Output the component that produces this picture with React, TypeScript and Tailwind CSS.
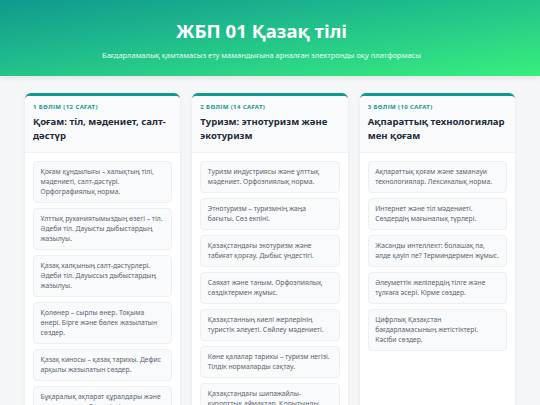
import React from "react";

const modules = [
  {
    label: "1 бөлім (12 сағат)",
    title: "Қоғам: тіл, мәдениет, салт-дәстүр",
    items: [
      "Қоғам құндылығы – халықтың тілі, мәдениеті, салт-дәстүрі. Орфографиялық норма.",
      "Ұлттық руханиятымыздың өзегі – тіл. Әдеби тіл. Дауысты дыбыстардың жазылуы.",
      "Қазақ халқының салт-дәстүрлері. Әдеби тіл. Дауыссыз дыбыстардың жазылуы.",
      "Қолөнер – сырлы өнер. Тоқыма өнері. Бірге және бөлек жазылатын сөздер.",
      "Қазақ киносы – қазақ тарихы. Дефис арқылы жазылатын сөздер.",
      "Бұқаралық ақпарат құралдары және ұлттық мүдде. Бас әріптің жазылуы.",
    ],
  },
  {
    label: "2 бөлім (14 сағат)",
    title: "Туризм: этнотуризм және экотуризм",
    items: [
      "Туризм индустриясы және ұлттық мәдениет. Орфоэпиялық норма.",
      "Этнотуризм – туризмнің жаңа бағыты. Сөз екпіні.",
      "Қазақстандағы экотуризм және табиғат қорғау. Дыбыс үндестігі.",
      "Саяхат және таным. Орфоэпиялық сөздіктермен жұмыс.",
      "Қазақстанның киелі жерлерінің туристік әлеуеті. Сөйлеу мәдениеті.",
      "Көне қалалар тарихы – туризм негізі. Тілдік нормаларды сақтау.",
      "Қазақстандағы шипажайлы-курорттық аймақтар. Қорытынды сабақ.",
    ],
  },
  {
    label: "3 бөлім (10 сағат)",
    title: "Ақпараттық технологиялар мен қоғам",
    items: [
      "Ақпараттық қоғам және заманауи технологиялар. Лексикалық норма.",
      "Интернет және тіл мәдениеті. Сөздердің мағыналық түрлері.",
      "Жасанды интеллект: болашақ па, әлде қауіп пе? Терминдермен жұмыс.",
      "Әлеуметтік желілердің тілге және тұлғаға әсері. Кірме сөздер.",
      "Цифрлық Қазақстан бағдарламасының жетістіктері. Кәсіби сөздер.",
    ],
  },
];

export default function App() {
  return (
    <div className="w-[540px] h-[405px] overflow-hidden bg-[#f4f6f7] font-['Noto_Sans',sans-serif]">
      <header className="h-[76px] pr-[17px] bg-gradient-to-br from-[#11998e] to-[#38ef7d] flex flex-col items-center text-white shadow-[0_2px_6px_rgba(0,0,0,0.08)]">
        <h1 className="mt-[18px] text-[18.6px] leading-[26px] font-bold">ЖБП 01 Қазақ тілі</h1>
        <p className="mt-[6px] text-[7.47px] leading-[10px] text-white/90">
          Бағдарламалық қамтамасыз ету мамандығына арналған электронды оқу платформасы
        </p>
      </header>
      <main className="grid grid-cols-3 gap-[12px] px-[25px] pt-[17px]">
        {modules.map((m) => (
          <section
            key={m.label}
            className="bg-white rounded-[6px] border-t-[3px] border-[#11998e] shadow-[0_1px_4px_rgba(0,0,0,0.06)] min-h-[330px]"
          >
            <div className="bg-[#f8fafb] rounded-t-[4px] px-[8px] pt-[8px] pb-[9px] border-b border-[#f0f2f4]">
              <div className="text-[6px] leading-[7px] font-bold uppercase tracking-[0.4px] text-[#11998e]">
                {m.label}
              </div>
              <h2 className="mt-[4px] text-[9.54px] leading-[14px] font-bold text-[#1f2d3a]">{m.title}</h2>
            </div>
            <div className="flex flex-col gap-[5px] px-[8px] pt-[8px] pb-[8px]">
              {m.items.map((it) => (
                <div
                  key={it}
                  className="bg-[#f8fafc] border border-[#edf0f3] rounded-[4px] px-[6.5px] py-[5px] text-[6.75px] leading-[10px] text-[#5c646d]"
                >
                  {it}
                </div>
              ))}
            </div>
          </section>
        ))}
      </main>
    </div>
  );
}
